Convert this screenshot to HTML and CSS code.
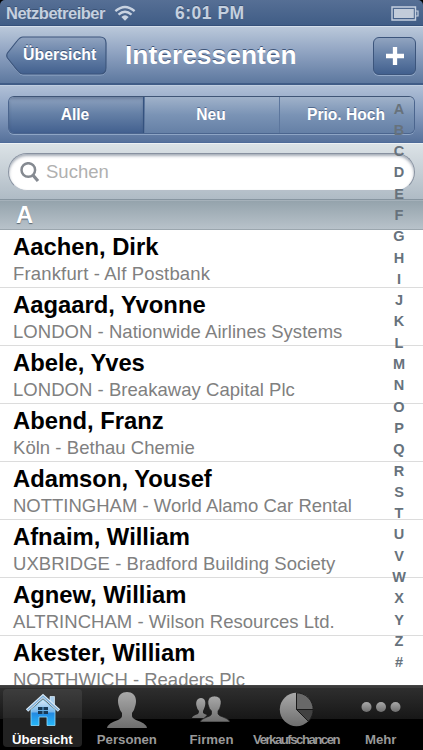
FILE: index.html
```html
<!DOCTYPE html>
<html lang="de">
<head>
<meta charset="utf-8">
<title>Interessenten</title>
<link rel="stylesheet" href="styles.css">
</head>
<body>
<div class="screen">
  <div class="status">
    <span class="carrier">Netzbetreiber</span>
    <svg class="wifi" width="22" height="17" viewBox="0 0 22 17" fill="none" stroke="#c9d3e1" stroke-width="2.3"><path d="M1.4 6.2Q11-2.2 20.6 6.2M4.5 9.6Q11 3.8 17.5 9.6"/><path d="M7.3 12Q11 8.600 14.700 12L11 15.800Z" fill="#c9d3e1" stroke="none"/></svg>
    <span class="time">6:01 PM</span>
    <svg class="battery" width="28" height="15" viewBox="0 0 28 15"><path d="M1 1H24.500V14H1Z" fill="none" stroke="#c5d0df" stroke-width="1.4"/><path d="M24.500 5H27V10H24.500" fill="none" stroke="#c5d0df" stroke-width="1.2"/><rect x="3" y="3" width="19.8" height="9" fill="#c2ccda"/></svg>
  </div>
  <header class="nav">
    <div class="back">
      <svg class="back-shape" width="101" height="40" viewBox="0 0 101 40"><defs><linearGradient id="bk" x1="0" y1="0" x2="0" y2="1"><stop offset="0" stop-color="#91a4c0"/><stop offset=".5" stop-color="#6580a7"/><stop offset="1" stop-color="#42608e"/></linearGradient></defs><path d="M17 2H94Q100 2 100 8V33Q100 39 94 39H17Q14 39 11 35L1.500 23Q0 20.500 1.500 18L11 6Q14 2 17 2Z" fill="none" stroke="#93a9c8" stroke-width="1"/><path d="M17 1H94Q100 1 100 7V32Q100 38 94 38H17Q14 38 11 34L1.500 22Q0 19.500 1.500 17L11 5Q14 1 17 1Z" fill="url(#bk)" stroke="#3c557c" stroke-width="1.2"/></svg>
      <span class="back-text">Übersicht</span>
    </div>
    <h1>Interessenten</h1>
    <div class="add"><svg width="18" height="18" viewBox="0 0 18 18"><path d="M9 0V18M0 9H18" stroke="#fff" stroke-width="4.3"/></svg></div>
  </header>
  <div class="scope"><div class="segments"><span class="seg on">Alle</span><span class="seg">Neu</span><span class="seg">Prio. Hoch</span></div></div>
  <div class="search"><div class="field"><svg width="20" height="21" viewBox="0 0 20 21" fill="none" stroke="#858a91"><circle cx="8.3" cy="8" r="6.8" stroke-width="2.5"/><path d="M12.800 13L18 19" stroke-width="3.200"/></svg><span>Suchen</span></div></div>
  <div class="section">A</div>
  <main class="list">
    <div class="row"><b>Aachen, Dirk</b><span class="w1">Frankfurt - Alf Postbank</span></div>
    <div class="row"><b>Aagaard, Yvonne</b><span>LONDON - Nationwide Airlines Systems</span></div>
    <div class="row"><b>Abele, Yves</b><span>LONDON - Breakaway Capital Plc</span></div>
    <div class="row"><b>Abend, Franz</b><span>Köln - Bethau Chemie</span></div>
    <div class="row"><b>Adamson, Yousef</b><span class="w0">NOTTINGHAM - World Alamo Car Rental</span></div>
    <div class="row"><b>Afnaim, William</b><span>UXBRIDGE - Bradford Building Society</span></div>
    <div class="row"><b>Agnew, William</b><span>ALTRINCHAM - Wilson Resources Ltd.</span></div>
    <div class="row"><b>Akester, William</b><span class="w0">NORTHWICH - Readers Plc</span></div>
  </main>
  <footer class="tabs">
    <div class="tab active">
      <svg class="house" width="36" height="34" viewBox="0 0 36 34"><defs><linearGradient id="hs" x1="0" y1="0" x2="0" y2="1"><stop offset="0" stop-color="#dcecf8"/><stop offset=".48" stop-color="#74b5ea"/><stop offset=".52" stop-color="#2489e0"/><stop offset="1" stop-color="#25b8fa"/></linearGradient></defs><path d="M6 17L18 6.500L30 17V32.500H22V24H14V32.500H6Z" fill="url(#hs)" stroke="#8fdcff" stroke-width=".8"/><path d="M25 3.500H29.500V12L25 8Z" fill="#a9cfee" stroke="#e0effa" stroke-width=".7"/><path d="M2 17.500L18 3L34 17.500" fill="none" stroke="#daebf8" stroke-width="3.400"/><path d="M2.500 17.300L18 3.300L33.500 17.300" fill="none" stroke="#81b0d9" stroke-width="1.400"/><path d="M13 14H23V21H13Z" fill="#173955"/><path d="M18 14V21M13 17.500H23" stroke="#69afe2" stroke-width="1"/></svg>
      <span>Übersicht</span>
    </div>
    <div class="tab">
      <svg width="40" height="36" viewBox="0 0 40 36"><defs><linearGradient id="gr" x1="0" y1="0" x2="0" y2="1"><stop offset="0" stop-color="#a9a9a9"/><stop offset="1" stop-color="#6e6e6e"/></linearGradient></defs><path d="M20 0C25 0 29 3 29 9Q29 11 28.500 13Q27.500 18 25 21V24Q25 26 29 28Q39 31 40 36H0Q1 31 11 28Q15 26 15 24V21Q12.500 18 11.500 13Q11 11 11 9C11 3 15 0 20 0Z" fill="url(#gr)"/></svg>
      <span>Personen</span>
    </div>
    <div class="tab">
      <svg class="pair" width="38" height="26" viewBox="0 0 38 26"><path d="M9 2C13 2 14 6 13 10Q12 13 11 15V17Q12 18 15 19L12 22H0Q0 20 6 18Q7 17 7 15Q5 13 4.500 10C3.500 6 5 2 9 2Z" fill="url(#gr)"/><path d="M22.500 0C28 0 30 4 28.800 9Q28 13 26 15V18Q27 20 31 21Q37 23 38 26H8Q9 23 15 21Q19 20 19.500 18V15Q17 13 16.200 9C15 4 17 0 22.500 0Z" fill="url(#gr)" stroke="#1c1c1c" stroke-width=".7"/></svg>
      <span>Firmen</span>
    </div>
    <div class="tab">
      <svg width="35" height="35" viewBox="0 0 35 35"><circle cx="17.500" cy="17.500" r="16.700" fill="url(#gr)"/><path d="M17.500 17.500V.8A16.700 16.700 0 0 1 34.200 17.500Z" fill="#686868" stroke="#191919" stroke-width="1"/><path d="M17.500 17.500H34.200A16.700 16.700 0 0 1 29.300 29.300Z" fill="#414141" stroke="#191919" stroke-width="1"/></svg>
      <span class="squeezed">Verkaufschancen</span>
    </div>
    <div class="tab">
      <svg class="dots" width="40" height="12" viewBox="0 0 40 12" fill="url(#gr)"><circle cx="5.500" cy="6" r="5"/><circle cx="20" cy="6" r="5"/><circle cx="34.500" cy="6" r="5"/></svg>
      <span>Mehr</span>
    </div>
  </footer>
  <div class="index"><i>A</i><i>B</i><i>C</i><i>D</i><i>E</i><i>F</i><i>G</i><i>H</i><i>I</i><i>J</i><i>K</i><i>L</i><i>M</i><i>N</i><i>O</i><i>P</i><i>Q</i><i>R</i><i>S</i><i>T</i><i>U</i><i>V</i><i>W</i><i>X</i><i>Y</i><i>Z</i><i>#</i></div>
</div>
</body>
</html>
```
FILE: styles.css
```css
* { box-sizing: border-box; }
body { margin: 0; background: #000; font-family: "Liberation Sans", Arial, sans-serif; }
svg { display: block; flex: none; }
.screen { position: relative; width: 423px; height: 750px; overflow: hidden; display: flex; flex-direction: column; border-radius: 5px 5px 0 0; white-space: nowrap; }
.status { height: 26px; flex: none; display: flex; align-items: center; padding: 1px 4px 0 6px; background: linear-gradient(#566f95, #405d86); border-bottom: 1px solid #35507a; color: #c5d0df; font-weight: bold; text-shadow: 0 -1px 0 rgba(40,60,90,.5); }
.carrier { width: 108px; font-size: 16.5px; letter-spacing: -.5px; }
.wifi { margin-top: 1px; }
.time { margin-left: 39px; font-size: 17.5px; letter-spacing: .5px; }
.battery { margin-left: auto; }
.nav { height: 59px; flex: none; display: flex; align-items: flex-start; padding: 10px 6px 0; background: linear-gradient(#bac8da, #8da1c0 48%, #5d789f); border-top: 1px solid #d5dfeb; border-bottom: 2px solid #405c87; color: #fff; text-shadow: 0 -1px 0 #3e5578; }
.back { display: grid; width: 101px; height: 40px; margin-top: -1px; }
.back > * { grid-area: 1 / 1; }
.back-text { padding-left: 17px; font-size: 15.9px; font-weight: bold; line-height: 37px; }
h1 { margin: -2px 0 0 18px; font-size: 26.4px; line-height: 40px; }
.add { width: 43px; height: 38px; margin-left: auto; margin-right: 1px; display: flex; align-items: center; justify-content: center; border: 1px solid #3c557c; border-radius: 6px; background: linear-gradient(#91a4c0, #6580a7 50%, #42608e); box-shadow: 0 1px 0 #93a9c8; }
.scope { height: 58px; flex: none; padding: 10px 8px 0; background: linear-gradient(#b0c0d7, #879dbf 48%, #56719b); border-top: 1px solid #c0cee1; border-bottom: 1px solid #4e6b99; }
.segments { display: grid; grid-template-columns: 135px 135px 1fr; height: 38px; overflow: hidden; border: 1px solid #4b658e; border-top-color: #3f5576; border-radius: 6px; box-shadow: 0 1px 0 #8ea5c5; }
.seg { padding-right: 2px; text-align: center; color: #fff; font-size: 15.6px; font-weight: bold; line-height: 35px; text-shadow: 0 -1px 0 #536b8e; border-left: 1px solid #5c769d; background: linear-gradient(#a0b2ca, #7a93b5 50%, #6580a6); }
.seg.on { border-left: 0; border-right: 1px solid #34527f; background: linear-gradient(#8ea2bf, #6681a7 45%, #42608f); box-shadow: inset 0 2px 3px rgba(50,70,100,.35); }
.search { height: 56px; flex: none; padding: 9px 8px 0; background: linear-gradient(#dbe2e6, #c6cfd6 50%, #afbbc5); border-top: 1px solid #edf1f4; }
.field { height: 38px; display: flex; align-items: center; padding-left: 11px; gap: 6px; border: 1px solid #8791a0; border-bottom-color: #b7c0ca; border-radius: 19px; background: #fff; box-shadow: inset 0 2px 3px rgba(85,100,120,.55); color: #b0b0b0; font-size: 18.5px; }
.section { height: 31px; flex: none; padding-left: 16px; border-top: 1px solid #8795a0; border-bottom: 1px solid #9ba6ae; background: linear-gradient(#93a2ab, #b8c2ca); box-shadow: inset 0 1px 0 #a5b1ba; color: #fff; font-size: 23.8px; font-weight: bold; line-height: 29px; text-shadow: 0 1px 1px #5a6670; }
.list { height: 455px; flex: none; overflow: hidden; background: #fff; }
.row { height: 58px; display: flex; flex-direction: column; padding: 3px 13px 0; border-bottom: 1px solid #dcdcdc; }
.row b { font-size: 23.8px; line-height: 28px; color: #000; }
.row span { font-size: 18.5px; line-height: 26px; letter-spacing: .04px; color: #808080; }
.row .w1 { letter-spacing: .16px; }
.row .w0 { letter-spacing: 0; }
.tabs { height: 65px; flex: none; display: grid; grid-template-columns: repeat(5, 84.6px); padding-bottom: 2px; background: linear-gradient(#3b3b3b 0 2px, #2e2e2e 2px, #171717 33px, #000 33px); border-top: 1px solid #444; }
.tab { height: 58px; margin: 3px; display: flex; flex-direction: column; align-items: center; justify-content: space-between; padding-top: 3px; border-radius: 4px; color: #999; font-size: 13.2px; font-weight: bold; line-height: 15px; }
.tab.active { color: #fff; background: linear-gradient(#3d3d3d, #292929 50%, #222 50%); padding-top: 4px; }
.house { margin-left: 2px; }
.pair { margin-top: 4px; }
.dots { margin-top: 9px; }
.squeezed { letter-spacing: -1.5px; }
.index { position: absolute; left: 388px; top: 98.5px; width: 22px; display: flex; flex-direction: column; text-align: center; color: #67727c; font-size: 14.5px; font-weight: bold; }
.index i { font-style: normal; height: 21.3px; line-height: 21.3px; }
```
